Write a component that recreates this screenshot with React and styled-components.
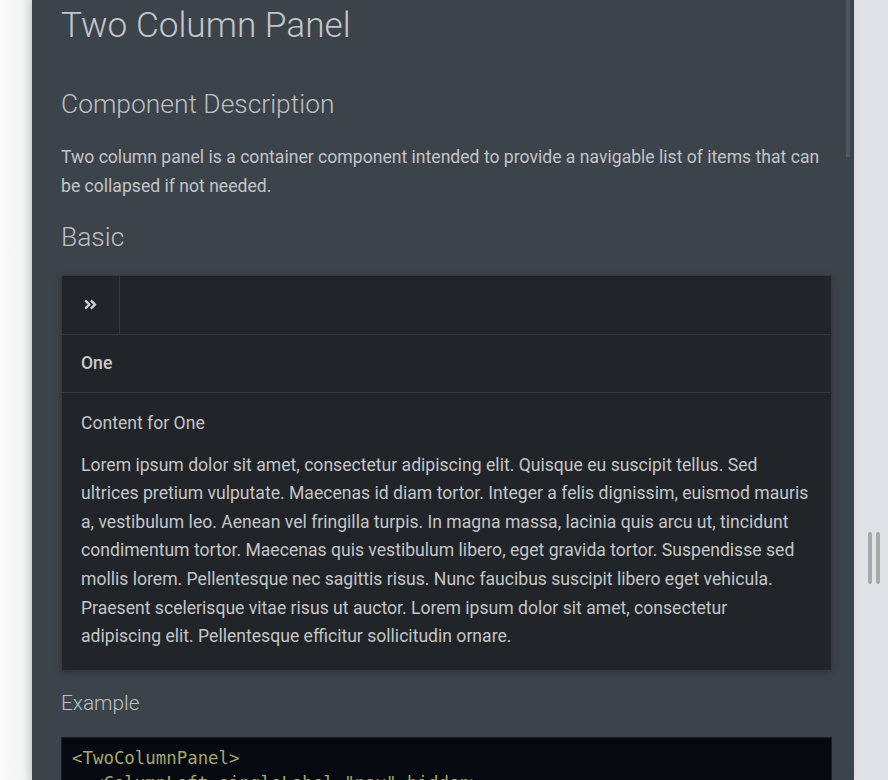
import styled, { createGlobalStyle } from 'styled-components';
import { FaAngleDoubleRight } from 'react-icons/fa';

const GlobalStyle = createGlobalStyle`
    html, body {
        margin: 0;
        padding: 0;
        background: #e1e2e6;
        font-family: Roboto, "Noto Sans", sans-serif;
    }
    * {
        box-sizing: border-box;
    }
`;

const Layout = styled.div`
    display: flex;
    width: 888px;
    height: 780px;
    overflow: hidden;
`;

const LeftRail = styled.div`
    width: 32px;
    flex-shrink: 0;
    background: linear-gradient(to right, #fbfbfb, #f1f2f2 80%, #e6e8e8);
`;

const MainPanel = styled.main`
    position: relative;
    width: 822px;
    flex-shrink: 0;
    padding: 4px 22px 0 29px;
    background: #3d434b;
    overflow: hidden;
    box-shadow: -3px 0 8px rgba(0, 0, 0, 0.12);
`;

const ScrollThumb = styled.div`
    position: absolute;
    top: 0;
    right: 4px;
    width: 4px;
    height: 157px;
    background: #50565c;
`;

const Title = styled.h1`
    margin: 0;
    font-size: 35.2px;
    line-height: 42px;
    font-weight: 300;
    color: #c4c6c9;
`;

const SectionHeading = styled.h2`
    margin: ${(p) => p.$top}px 0 0;
    font-size: 26.4px;
    line-height: 32px;
    font-weight: 300;
    color: #bdc0c3;
`;

const SubHeading = styled.h3`
    margin: 20px 0 0;
    font-size: 20.8px;
    line-height: 25px;
    font-weight: 300;
    color: #bdc0c3;
`;

const Text = styled.p`
    margin: 23px 0 0;
    font-size: 17.6px;
    line-height: 28.6px;
    color: #c2c5c8;
`;

const Panel = styled.section`
    margin-top: 22px;
    background: #212529;
    border: 1px solid #353a40;
    border-radius: 2px;
    box-shadow: 0 2px 6px rgba(0, 0, 0, 0.22);
`;

const Toolbar = styled.div`
    display: flex;
    height: 59px;
    border-bottom: 1px solid #353a40;
`;

const ToggleButton = styled.div`
    width: 58px;
    display: flex;
    align-items: center;
    justify-content: center;
    border-right: 1px solid #353a40;
    color: #cfd1d3;
`;

const ItemRow = styled.div`
    display: flex;
    align-items: center;
    height: 58px;
    padding-left: 19px;
    border-bottom: 1px solid #353a40;
    font-size: 17.6px;
    font-weight: 500;
    color: #c9cbcd;
`;

const PanelBody = styled.div`
    padding: 16px 21px 19px 19px;
    font-size: 17.6px;
    line-height: 28.6px;
    color: #c4c6c8;
`;

const BodyText = styled.p`
    margin: 0 0 ${(p) => p.$gap || 0}px;
`;

const CodeBlock = styled.pre`
    margin: 21px 0 0;
    padding: 8px 10px;
    background: #040a10;
    border: 1px solid #1a1f25;
    font-family: "DejaVu Sans Mono", "Liberation Mono", monospace;
    font-size: 17.4px;
    line-height: 25px;
    color: #a9a76d;
`;

const RightPane = styled.aside`
    flex: 1;
    padding: 532px 0 0 14px;
`;

const Grip = styled.div`
    display: flex;
    gap: 4px;
`;

const GripBar = styled.span`
    display: block;
    width: 4px;
    height: 52px;
    border-radius: 2px;
    background: #a8a8a9;
`;

const lorem =
    'Lorem ipsum dolor sit amet, consectetur adipiscing elit. Quisque eu suscipit tellus. Sed ultrices pretium vulputate. Maecenas id diam tortor. Integer a felis dignissim, euismod mauris a, vestibulum leo. Aenean vel fringilla turpis. In magna massa, lacinia quis arcu ut, tincidunt condimentum tortor. Maecenas quis vestibulum libero, eget gravida tortor. Suspendisse sed mollis lorem. Pellentesque nec sagittis risus. Nunc faucibus suscipit libero eget vehicula. Praesent scelerisque vitae risus ut auctor. Lorem ipsum dolor sit amet, consectetur adipiscing elit. Pellentesque efficitur sollicitudin ornare.';

function App() {
    return (
        <Layout>
            <GlobalStyle />
            <LeftRail />
            <MainPanel>
                <ScrollThumb />
                <Title>Two Column Panel</Title>
                <SectionHeading $top={42}>Component Description</SectionHeading>
                <Text>
                    Two column panel is a container component intended to provide a navigable list of items that can
                    be collapsed if not needed.
                </Text>
                <SectionHeading $top={20.5}>Basic</SectionHeading>
                <Panel>
                    <Toolbar>
                        <ToggleButton>
                            <FaAngleDoubleRight size={15} />
                        </ToggleButton>
                    </Toolbar>
                    <ItemRow>One</ItemRow>
                    <PanelBody>
                        <BodyText $gap={13.4}>Content for One</BodyText>
                        <BodyText>{lorem}</BodyText>
                    </PanelBody>
                </Panel>
                <SubHeading>Example</SubHeading>
                <CodeBlock>{'<TwoColumnPanel>\n  <ColumnLeft singleLabel="nav" hidden>'}</CodeBlock>
            </MainPanel>
            <RightPane>
                <Grip>
                    <GripBar />
                    <GripBar />
                </Grip>
            </RightPane>
        </Layout>
    );
}

export default App;
